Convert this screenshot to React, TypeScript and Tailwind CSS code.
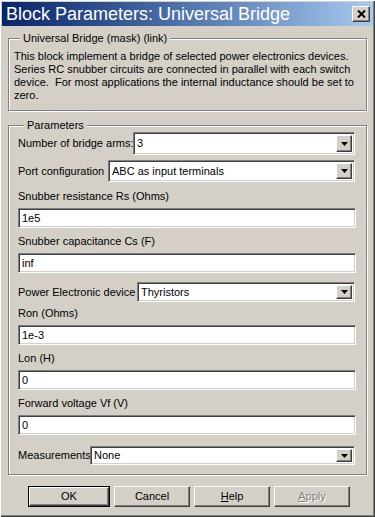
import React from 'react';

const sunken =
  'border border-t-[#808080] border-l-[#808080] border-r-white border-b-white shadow-[inset_1px_1px_0_#404040,inset_-1px_-1px_0_#d4d0c8]';
const raised =
  'border border-t-white border-l-white border-r-[#404040] border-b-[#404040] shadow-[inset_-1px_-1px_0_#808080,inset_1px_1px_0_#d4d0c8]';

function Arrow() {
  return (
    <div className={`w-[16px] h-full bg-[#d4d0c8] flex items-center justify-center shrink-0 ${raised}`}>
      <svg width="7" height="4" viewBox="0 0 7 4">
        <path d="M0 0h7L3.5 4z" fill="#000" />
      </svg>
    </div>
  );
}

function Select({ value, className }: { value: string; className: string }) {
  return (
    <div className={`flex bg-white pl-[3px] pr-[2px] py-[2px] ${sunken} ${className}`}>
      <span className="flex-1 flex items-center whitespace-nowrap">{value}</span>
      <Arrow />
    </div>
  );
}

function Field({ label, value, mt }: { label: string; value: string; mt: string }) {
  return (
    <>
      <div className={`leading-[13px] whitespace-nowrap ${mt}`}>{label}</div>
      <div className={`mt-[5px] h-[20px] bg-white flex items-center pl-[3px] mr-[-1px] ${sunken}`}>{value}</div>
    </>
  );
}

function Button({ children, isDefault, disabled }: { children: React.ReactNode; isDefault?: boolean; disabled?: boolean }) {
  const inner = (
    <div
      className={`h-full flex items-center justify-center bg-[#d4d0c8] ${raised} ${
        disabled ? 'text-[#808080] [text-shadow:1px_1px_0_#fff]' : 'text-black'
      }`}
    >
      {children}
    </div>
  );
  return isDefault ? (
    <div className="w-[82px] h-[21px] border border-black">{inner}</div>
  ) : (
    <div className="w-[76px] h-[21px]">{inner}</div>
  );
}

export default function App() {
  return (
    <div
      className="w-[375px] h-[517px] bg-[#d4d0c8] p-[2px] flex flex-col text-[11px] text-black shadow-[inset_1px_1px_0_#fff,inset_-1px_-1px_0_#404040,inset_-2px_-2px_0_#808080] overflow-hidden"
      style={{ fontFamily: '"Liberation Sans", Arial, sans-serif' }}
    >
      {/* Title bar */}
      <div className="h-[24px] shrink-0 bg-gradient-to-r from-[#0a246a] to-[#a6caf0] flex items-center justify-between pl-[4px] pr-[3px]">
        <span className="text-white text-[18px] leading-[24px]">Block Parameters: Universal Bridge</span>
        <div className={`w-[18px] h-[16px] bg-[#d4d0c8] flex items-center justify-center ${raised}`}>
          <svg width="9" height="8" viewBox="0 0 9 8">
            <path d="M1 0.5l7 7M8 0.5l-7 7" stroke="#000" strokeWidth="2" />
          </svg>
        </div>
      </div>

      <div className="pl-[6px] pr-[6px] flex flex-col">
        {/* Description group */}
        <fieldset className="mt-[6px] border border-[#808080] shadow-[inset_1px_1px_0_#fff,1px_1px_0_#fff] pl-[5px] pr-[4px] pb-[8px]">
          <legend className="ml-[6px] px-[3px] leading-[13px] bg-[#d4d0c8]">Universal Bridge (mask) (link)</legend>
          <p className="mt-[5px] leading-[13px]">
            This block implement a bridge of selected power electronics devices. Series RC snubber circuits are connected in
            parallel with each switch device.&nbsp; For most applications the internal inductance should be set to zero.
          </p>
        </fieldset>

        {/* Parameters group */}
        <fieldset className="mt-[8px] border border-[#808080] shadow-[inset_1px_1px_0_#fff,1px_1px_0_#fff] pl-[9px] pr-[11px] pb-[9px]">
          <legend className="ml-[6px] px-[3px] leading-[13px] bg-[#d4d0c8]">Parameters</legend>
          <div className="flex flex-col">
            <div className="mt-[0px] flex items-center h-[23px]">
              <span className="w-[115px] shrink-0 whitespace-nowrap">Number of bridge arms:</span>
              <Select value="3" className="flex-1 h-full" />
            </div>
            <div className="mt-[5px] flex items-center h-[22px]">
              <span className="w-[90px] shrink-0 whitespace-nowrap">Port configuration</span>
              <Select value="ABC as input terminals" className="flex-1 h-full" />
            </div>
            <Field label="Snubber resistance Rs (Ohms)" value="1e5" mt="mt-[8px]" />
            <Field label="Snubber capacitance Cs (F)" value="inf" mt="mt-[7px]" />
            <div className="mt-[9px] flex items-center h-[20px]">
              <span className="w-[119px] shrink-0 whitespace-nowrap">Power Electronic device</span>
              <Select value="Thyristors" className="flex-1 h-full" />
            </div>
            <Field label="Ron (Ohms)" value="1e-3" mt="mt-[5px]" />
            <Field label="Lon (H)" value="0" mt="mt-[7px]" />
            <Field label="Forward voltage Vf (V)" value="0" mt="mt-[7px]" />
            <div className="mt-[11px] flex items-center h-[19px]">
              <span className="w-[72px] shrink-0 whitespace-nowrap">Measurements</span>
              <Select value="None" className="flex-1 h-full" />
            </div>
          </div>
        </fieldset>

        {/* Buttons */}
        <div className="mt-[11px] pl-[20px] flex gap-[4px]">
          <Button isDefault>OK</Button>
          <Button>Cancel</Button>
          <Button>
            <span>
              <u>H</u>elp
            </span>
          </Button>
          <Button disabled>
            <span>
              <u>A</u>pply
            </span>
          </Button>
        </div>
      </div>
    </div>
  );
}
